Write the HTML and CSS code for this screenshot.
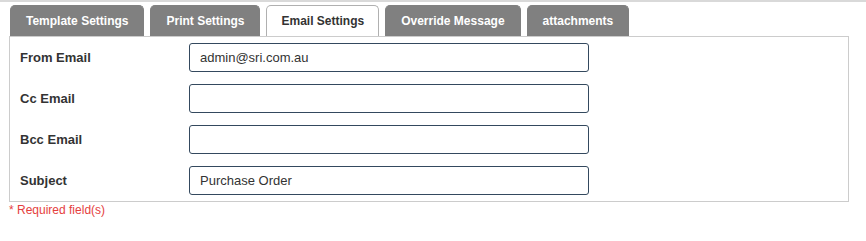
FILE: index.html
```html
<!DOCTYPE html>
<html>
<head>
<meta charset="utf-8">
<link rel="stylesheet" href="styles.css">
</head>
<body>
<div class="page">
  <div class="tabs">
    <div class="tab">Template Settings</div>
    <div class="tab">Print Settings</div>
    <div class="tab active">Email Settings</div>
    <div class="tab">Override Message</div>
    <div class="tab">attachments</div>
  </div>
  <div class="panel">
    <div class="row">
      <label class="label">From Email</label>
      <input class="field" type="text" value="admin@sri.com.au">
    </div>
    <div class="row">
      <label class="label">Cc Email</label>
      <input class="field" type="text" value="">
    </div>
    <div class="row">
      <label class="label">Bcc Email</label>
      <input class="field" type="text" value="">
    </div>
    <div class="row">
      <label class="label">Subject</label>
      <input class="field" type="text" value="Purchase Order">
    </div>
  </div>
  <div class="required">* Required field(s)</div>
</div>
</body>
</html>
```
FILE: styles.css
```css
html, body {
  margin: 0;
  padding: 0;
  background: #fff;
  font-family: "Liberation Sans", Arial, sans-serif;
}
.page {
  border-top: 2px solid #d9d9d9;
  padding: 3px 17px 0 9px;
}
.tabs {
  display: flex;
  gap: 6px;
  padding-left: 1px;
}
.tab {
  height: 30px;
  line-height: 30px;
  padding: 0 15px;
  border: 1px solid #808080;
  border-bottom: none;
  border-radius: 5px 5px 0 0;
  background: #808080;
  color: #fff;
  font-size: 12px;
  font-weight: bold;
  white-space: nowrap;
}
.tab.active {
  padding: 0 14px;
  background: #fff;
  border-color: #b0b0b0;
  color: #333;
}
.panel {
  border: 1px solid #cccccc;
  padding: 0 10px;
}
.row {
  display: flex;
  align-items: center;
  padding: 6px 0;
}
.label {
  width: 169px;
  font-size: 13px;
  font-weight: bold;
  color: #333;
}
.field {
  box-sizing: border-box;
  width: 400px;
  height: 29px;
  margin: 0;
  padding: 0 10px;
  border: 1px solid #34495e;
  border-radius: 3px;
  font-family: "Liberation Sans", Arial, sans-serif;
  font-size: 13px;
  color: #333;
  background: #fff;
  outline: none;
}
.required {
  margin-top: 1px;
  font-size: 12px;
  color: #e53e3e;
}
```
